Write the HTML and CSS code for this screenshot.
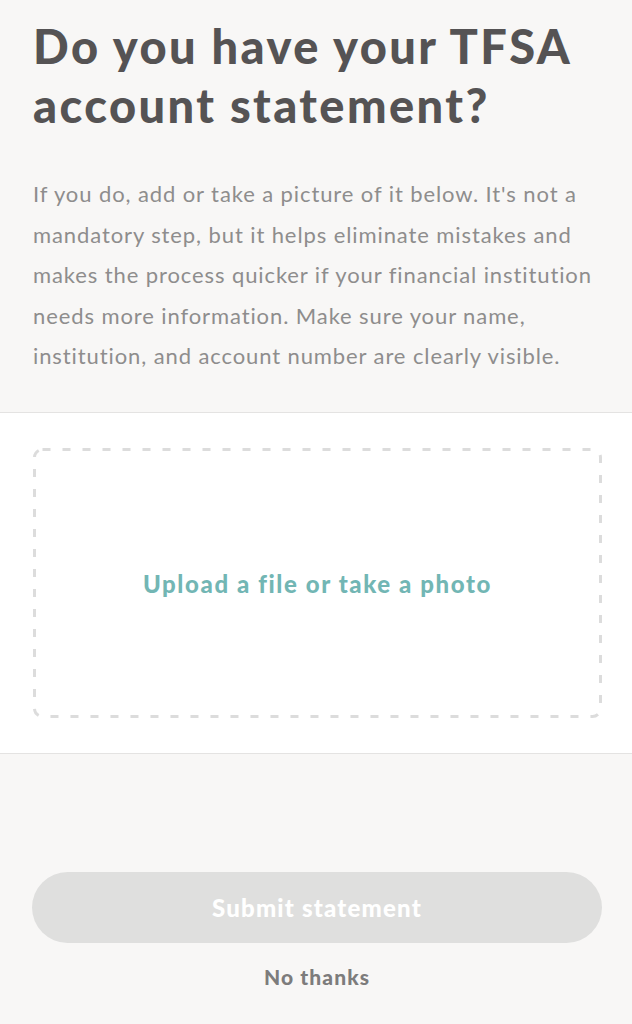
FILE: index.html
```html
<!DOCTYPE html>
<html lang="en">
<head>
<meta charset="utf-8">
<title>TFSA statement</title>
<link rel="stylesheet" href="styles.css">
</head>
<body>
<main class="page">
  <section class="intro">
    <h1 class="title">Do you have your TFSA account statement?</h1>
    <p class="lead">If you do, add or take a picture of it below. It's not a mandatory step, but it helps eliminate mistakes and makes the process quicker if your financial institution needs more information. Make sure your name, institution, and account number are clearly visible.</p>
  </section>
  <section class="upload-area">
    <button class="dropzone" type="button">
      <svg class="dash-frame" width="569" height="270" viewBox="0 0 569 270" aria-hidden="true">
        <rect x="1.5" y="1.5" width="566" height="267" rx="8" ry="8" fill="none" stroke="#dcdcdc" stroke-width="3" stroke-dasharray="8 12"/>
      </svg>
      <span class="dropzone-label">Upload a file or take a photo</span>
    </button>
  </section>
  <section class="actions">
    <button class="submit" type="button" disabled>Submit statement</button>
    <button class="skip" type="button">No thanks</button>
  </section>
</main>
</body>
</html>
```

FILE: styles.css
```css
* { box-sizing: border-box; }
html, body { margin: 0; padding: 0; }
body {
  background: #f8f7f6;
  font-family: Lato, "Open Sans", sans-serif;
  width: 632px;
  height: 1024px;
  overflow: hidden;
}
.page { display: flex; flex-direction: column; }
.intro {
  padding: 17px 33px 0 33px;
  height: 413px;
  border-bottom: 1px solid #e4e3e2;
}
.title {
  margin: 0;
  font-size: 47px;
  line-height: 59px;
  font-weight: 900;
  color: #555354;
  letter-spacing: 2.4px;
}
.lead {
  margin: 39px 0 0 0;
  max-width: 560px;
  font-size: 22px;
  line-height: 40.6px;
  font-weight: 400;
  color: #8e8d8d;
  letter-spacing: 0.9px;
}
.upload-area {
  background: #ffffff;
  padding: 35px 30px 35px 33px;
  height: 341px;
  border-bottom: 1px solid #e4e3e2;
}
.dropzone {
  position: relative;
  width: 569px;
  height: 270px;
  border: none;
  background: transparent;
  display: flex;
  align-items: center;
  justify-content: center;
  padding: 0;
  cursor: pointer;
}
.dash-frame {
  position: absolute;
  top: 0;
  left: 0;
}
.dropzone-label {
  font-family: Lato, "Open Sans", sans-serif;
  font-size: 24px;
  font-weight: 900;
  color: #72b6b4;
  letter-spacing: 1.6px;
}
.actions {
  display: flex;
  flex-direction: column;
  align-items: center;
  padding: 118px 30px 0 32px;
}
.submit {
  width: 570px;
  height: 71px;
  border: none;
  border-radius: 36px;
  background: #dfdfde;
  color: #ffffff;
  font-family: Lato, "Open Sans", sans-serif;
  font-size: 24px;
  font-weight: 900;
  letter-spacing: 1.2px;
}
.skip {
  margin-top: 21px;
  border: none;
  background: transparent;
  color: #7d7c7c;
  font-family: Lato, "Open Sans", sans-serif;
  font-size: 21px;
  font-weight: 900;
  letter-spacing: 1.1px;
  padding: 0;
}
```
